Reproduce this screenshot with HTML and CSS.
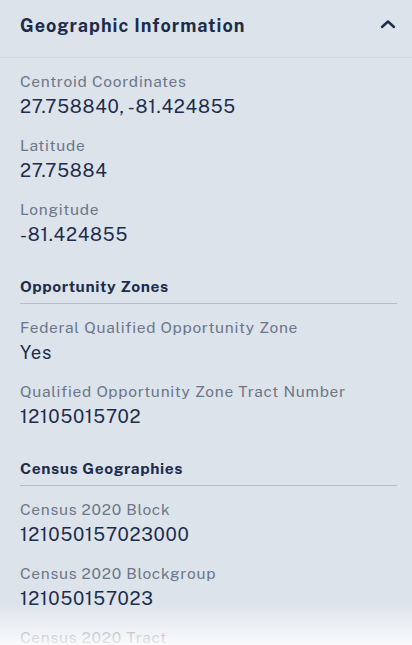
FILE: index.html
```html
<!doctype html>
<html>
  <head>
    <meta charset="utf-8" />
    <title>Geographic Information</title>
    <meta name="viewport" content="width=device-width, initial-scale=1.0" />
    <link rel="stylesheet" href="styles.css">
  </head>
  <body>
    <div class="panel">
      <div class="panel-header">
        <h2 class="panel-title">Geographic Information</h2>
        <svg class="chevron" width="16" height="10" viewBox="0 0 16 10">
          <path d="M2 8 L8 2.5 L14 8" fill="none" stroke="currentColor" stroke-width="2.4" stroke-linecap="round" stroke-linejoin="round" />
        </svg>
      </div>

      <div class="panel-body">
        <div class="field">
          <div class="field-label">Centroid Coordinates</div>
          <div class="field-value">27.758840, -81.424855</div>
        </div>
        <div class="field">
          <div class="field-label">Latitude</div>
          <div class="field-value">27.75884</div>
        </div>
        <div class="field">
          <div class="field-label">Longitude</div>
          <div class="field-value">-81.424855</div>
        </div>

        <h3 class="section-title">Opportunity Zones</h3>
        <div class="field">
          <div class="field-label">Federal Qualified Opportunity Zone</div>
          <div class="field-value">Yes</div>
        </div>
        <div class="field">
          <div class="field-label">Qualified Opportunity Zone Tract Number</div>
          <div class="field-value">12105015702</div>
        </div>

        <h3 class="section-title">Census Geographies</h3>
        <div class="field">
          <div class="field-label">Census 2020 Block</div>
          <div class="field-value">121050157023000</div>
        </div>
        <div class="field">
          <div class="field-label">Census 2020 Blockgroup</div>
          <div class="field-value">121050157023</div>
        </div>
        <div class="field">
          <div class="field-label">Census 2020 Tract</div>
          <div class="field-value">12105015702</div>
        </div>
      </div>
      <div class="fade"></div>
    </div>
  </body>
</html>
```

FILE: styles.css
```css
:root {
  --font-normal: "Public Sans", Inter, "Noto Sans", sans-serif;
  --color-bg: #dce3eb;
  --color-text: #1c2c4b;
  --color-label: #6c7688;
  --color-rule: #b4bdca;
}
* {
  margin: 0;
  padding: 0;
  box-sizing: border-box;
}
html,
body {
  height: 100vh;
  overflow: hidden;
  background: var(--color-bg);
  font-family: var(--font-normal);
  color: var(--color-text);
}
.panel {
  position: relative;
  height: 100vh;
  overflow: hidden;
  background: var(--color-bg);
  border-top-left-radius: 8px;
}
.panel-header {
  display: flex;
  align-items: center;
  justify-content: space-between;
  height: 58px;
  padding: 0 16px 0 20px;
  border-bottom: 1px solid #d3dae3;
}
.panel-title {
  font-size: 18px;
  font-weight: 700;
  letter-spacing: 1px;
  color: var(--color-text);
  margin-top: -6px;
}
.chevron {
  color: var(--color-text);
  margin-top: -9px;
}
.panel-body {
  display: flex;
  flex-direction: column;
  padding: 12px 15px 0 20px;
}
.field {
  display: flex;
  flex-direction: column;
  margin-bottom: 14px;
}
.field-label {
  font-size: 15.5px;
  line-height: 22px;
  letter-spacing: 0.7px;
  color: var(--color-label);
}
.field-value {
  font-size: 18.5px;
  line-height: 28px;
  letter-spacing: 0.75px;
  color: var(--color-text);
}
.section-title {
  font-size: 15.5px;
  font-weight: 700;
  line-height: 20px;
  letter-spacing: 0.6px;
  color: var(--color-text);
  margin-top: 14px;
  padding-bottom: 7px;
  border-bottom: 1px solid var(--color-rule);
  margin-bottom: 12px;
}
.fade {
  position: absolute;
  left: 0;
  right: 0;
  bottom: 0;
  height: 42px;
  background: linear-gradient(to bottom, rgba(255, 255, 255, 0), rgba(255, 255, 255, 0.85));
}
```
